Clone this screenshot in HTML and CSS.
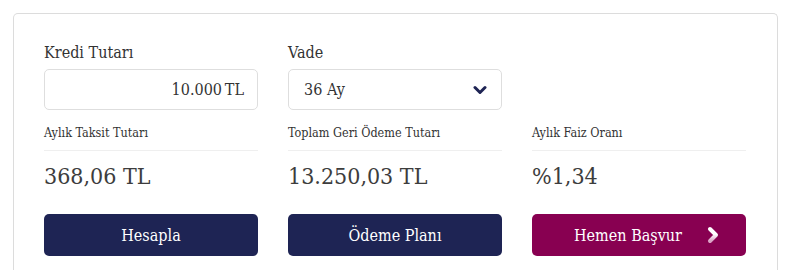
FILE: index.html
```html
<!DOCTYPE html>
<html lang="tr">
<head>
<meta charset="utf-8">
<link rel="stylesheet" href="styles.css">
</head>
<body>
<div class="card">
  <div class="grid">
    <div class="field">
      <label class="label">Kredi Tutarı</label>
      <div class="box box-input">10.000&#8239;TL</div>
    </div>
    <div class="field">
      <label class="label">Vade</label>
      <div class="box box-select">
        <span>36 Ay</span>
        <svg class="caret" width="14" height="10" viewBox="0 0 14 10"><path d="M2 2.5 L7 7.5 L12 2.5" fill="none" stroke="#1e2454" stroke-width="3" stroke-linecap="round" stroke-linejoin="round"/></svg>
      </div>
    </div>
    <div class="field"></div>

    <div class="result">
      <div class="rlabel">Aylık Taksit Tutarı</div>
      <div class="rvalue">368,06 TL</div>
    </div>
    <div class="result">
      <div class="rlabel">Toplam Geri Ödeme Tutarı</div>
      <div class="rvalue">13.250,03 TL</div>
    </div>
    <div class="result">
      <div class="rlabel">Aylık Faiz Oranı</div>
      <div class="rvalue">%1,34</div>
    </div>

    <button class="btn btn-navy">Hesapla</button>
    <button class="btn btn-navy">Ödeme Planı</button>
    <button class="btn btn-plum">Hemen Başvur
      <svg class="arrow" width="14" height="18" viewBox="0 0 14 18">
        <defs><linearGradient id="g" x1="0" y1="0" x2="0" y2="1"><stop offset="0.45" stop-color="#ffffff"/><stop offset="1" stop-color="#d9a0c4"/></linearGradient></defs>
        <path d="M4 3 L10 9 L4 15" fill="none" stroke="url(#g)" stroke-width="4" stroke-linecap="round" stroke-linejoin="round"/>
      </svg>
    </button>
  </div>
</div>
</body>
</html>
```
FILE: styles.css
```css
* { box-sizing: border-box; }
html, body { overflow: hidden; }
body {
  margin: 0;
  background: #ffffff;
  font-family: "DejaVu Serif", serif;
  font-stretch: condensed;
  color: #333333;
}
.card {
  margin: 13px 10px 0 13px;
  height: 257px;
  border: 1px solid #dcdcdc;
  border-bottom: 0;
  border-radius: 5px 5px 0 0;
  padding: 29px 30px 0 30px;
}
.grid {
  display: grid;
  grid-template-columns: repeat(3, 214px);
  column-gap: 30px;
}
.field {
  display: flex;
  flex-direction: column;
}
.label {
  font-size: 16px;
  line-height: 20px;
  margin-bottom: 6px;
  color: #333333;
}
.box {
  height: 41px;
  border: 1px solid #dedede;
  border-radius: 5px;
  font-size: 16px;
  color: #333333;
  display: flex;
  align-items: center;
}
.box-input {
  justify-content: flex-end;
  padding-right: 13px;
}
.box-select {
  justify-content: space-between;
  padding: 0 14px 0 15px;
}
.caret { display: block; }
.result {
  margin-top: 14px;
}
.rlabel {
  font-size: 12.5px;
  line-height: 18px;
  padding-bottom: 8px;
  border-bottom: 1px solid #efefef;
  color: #333333;
}
.rvalue {
  font-size: 23px;
  line-height: 30px;
  margin-top: 10px;
  color: #3d3d3d;
}
.btn {
  margin-top: 23px;
  height: 42px;
  border: 0;
  border-radius: 5px;
  color: #ffffff;
  font-family: inherit;
  font-stretch: condensed;
  font-size: 16px;
  display: flex;
  align-items: center;
  justify-content: center;
}
.btn-navy { background: #1e2454; }
.btn-plum { background: #880051; gap: 24px; padding-left: 22px; }
.arrow { display: block; }
```
